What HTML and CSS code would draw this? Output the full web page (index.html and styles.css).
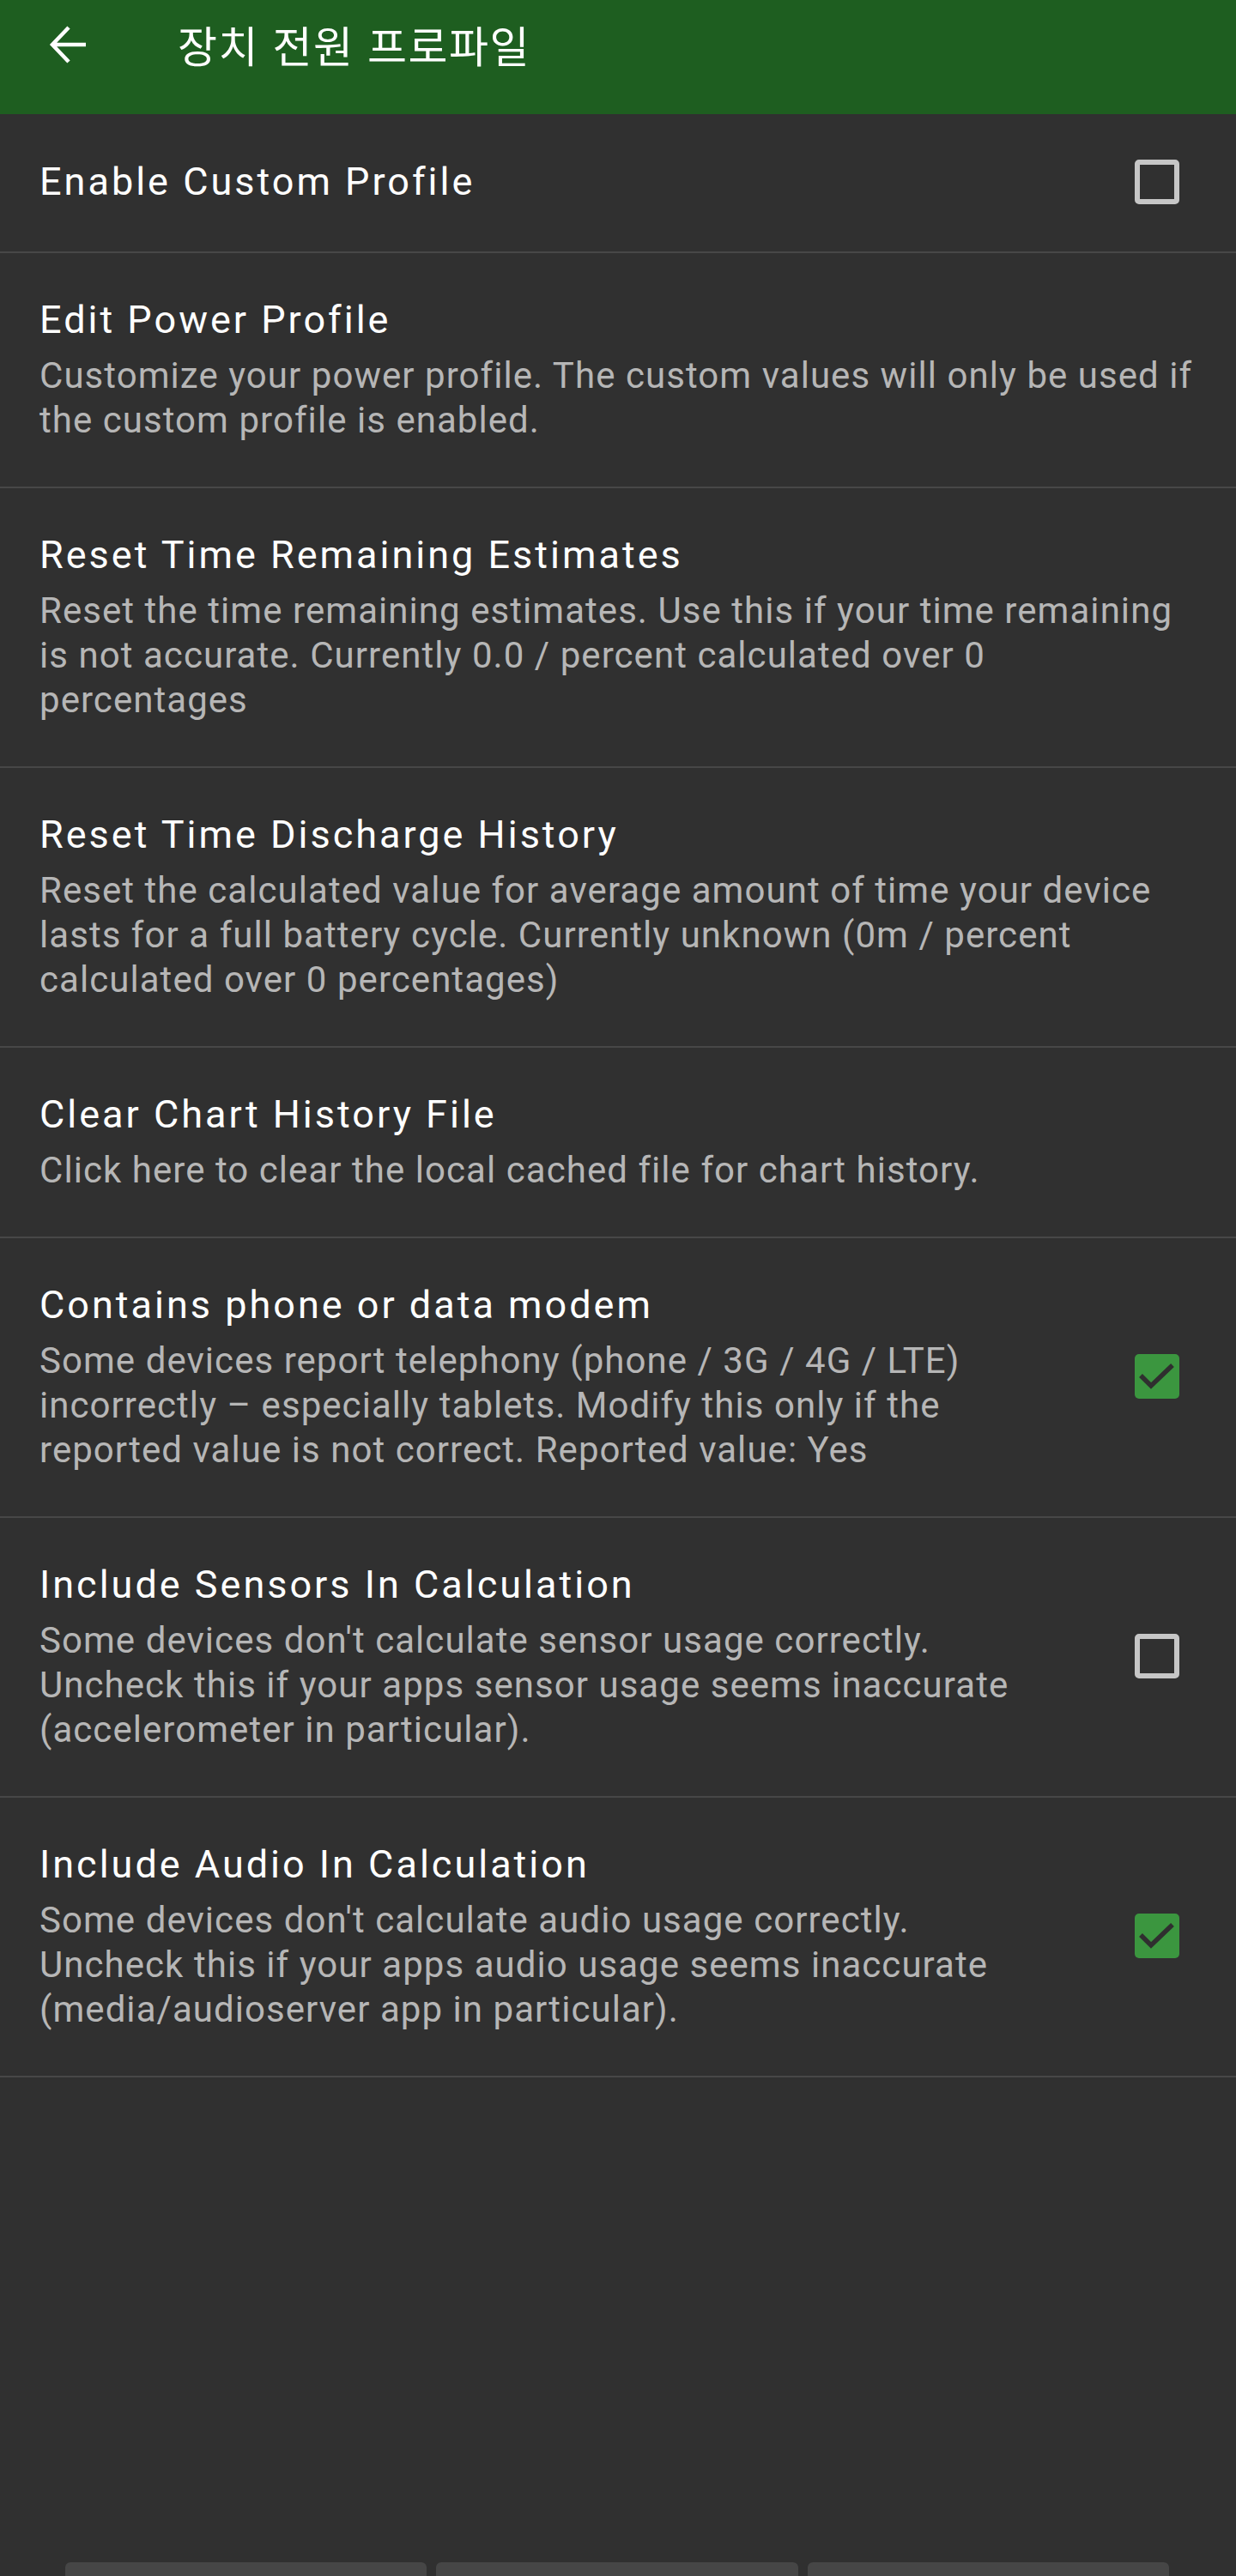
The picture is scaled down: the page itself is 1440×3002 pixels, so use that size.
FILE: index.html
```html
<!DOCTYPE html>
<html lang="ko">
<head>
<meta charset="utf-8">
<title>장치 전원 프로파일</title>
<link rel="stylesheet" href="styles.css">
</head>
<body>
<div class="screen">
  <header class="appbar">
    <svg class="back" viewBox="0 0 48 48" width="48" height="48" aria-hidden="true">
      <path d="M44 24H6M24 4L5 24l19 20" fill="none" stroke="#fff" stroke-width="4.5" stroke-linecap="butt" stroke-linejoin="miter"/>
    </svg>
    <h1 class="title">장치 전원 프로파일</h1>
  </header>

  <main class="list">
    <div class="pref">
      <div class="text"><div class="ptitle">Enable Custom Profile</div></div>
      <span class="cb"></span>
    </div>
    <div class="pref">
      <div class="text wide">
        <div class="ptitle">Edit Power Profile</div>
        <div class="psum">Customize your power profile. The custom values will only be used if the custom profile is enabled.</div>
      </div>
    </div>
    <div class="pref">
      <div class="text wide">
        <div class="ptitle">Reset Time Remaining Estimates</div>
        <div class="psum">Reset the time remaining estimates. Use this if your time remaining is not accurate. Currently 0.0 / percent calculated over 0 percentages</div>
      </div>
    </div>
    <div class="pref">
      <div class="text wide">
        <div class="ptitle">Reset Time Discharge History</div>
        <div class="psum">Reset the calculated value for average amount of time your device lasts for a full battery cycle. Currently unknown (0m / percent calculated over 0 percentages)</div>
      </div>
    </div>
    <div class="pref">
      <div class="text wide">
        <div class="ptitle">Clear Chart History File</div>
        <div class="psum">Click here to clear the local cached file for chart history.</div>
      </div>
    </div>
    <div class="pref">
      <div class="text">
        <div class="ptitle">Contains phone or data modem</div>
        <div class="psum">Some devices report telephony (phone / 3G / 4G / LTE) incorrectly – especially tablets. Modify this only if the reported value is not correct. Reported value: Yes</div>
      </div>
      <span class="cb on"><svg viewBox="0 0 52 52" width="52" height="52"><path d="M7 25l12 12L44 13" fill="none" stroke="#2f2f2f" stroke-width="5.5"/></svg></span>
    </div>
    <div class="pref">
      <div class="text">
        <div class="ptitle">Include Sensors In Calculation</div>
        <div class="psum">Some devices don't calculate sensor usage correctly. Uncheck this if your apps sensor usage seems inaccurate (accelerometer in particular).</div>
      </div>
      <span class="cb"></span>
    </div>
    <div class="pref">
      <div class="text">
        <div class="ptitle">Include Audio In Calculation</div>
        <div class="psum">Some devices don't calculate audio usage correctly. Uncheck this if your apps audio usage seems inaccurate (media/audioserver app in particular).</div>
      </div>
      <span class="cb on"><svg viewBox="0 0 52 52" width="52" height="52"><path d="M7 25l12 12L44 13" fill="none" stroke="#2f2f2f" stroke-width="5.5"/></svg></span>
    </div>
  </main>

  <footer class="navbar">
    <span class="tab"></span>
    <span class="tab"></span>
    <span class="tab"></span>
  </footer>
</div>
</body>
</html>
```

FILE: styles.css
```css
* { box-sizing: border-box; }
html, body { margin: 0; padding: 0; }
body {
  background: #303030;
  font-family: Roboto, "Noto Sans", "Noto Sans CJK KR", sans-serif;
  color: #fff;
}
.screen {
  width: 1440px;
  height: 3002px;
  display: flex;
  flex-direction: column;
  background: #303030;
  overflow: hidden;
}
.appbar {
  height: 133px;
  flex: none;
  background: #1e5e20;
  display: flex;
  align-items: flex-start;
  padding: 26px 0 0 56px;
}
.back { display: block; margin-top: 2px; }
.title {
  margin: 0 0 0 103px;
  font-family: "Noto Sans CJK KR", sans-serif;
  font-weight: 400;
  font-size: 50px;
  line-height: 50px;
  letter-spacing: 1.5px;
  color: #fff;
}
.list { flex: 1; }
.pref {
  display: flex;
  align-items: center;
  min-height: 162px;
  padding: 48px 66px 51px 46px;
  border-bottom: 2px solid #474747;
}
.text { flex: 1; min-width: 0; padding-right: 100px; }
.text.wide { padding-right: 0; margin-right: -26px; }
.ptitle {
  font-size: 45px;
  line-height: 60px;
  letter-spacing: 3px;
  color: #fff;
}
.psum {
  margin-top: 9px;
  font-size: 42px;
  line-height: 52px;
  letter-spacing: 1.05px;
  color: #b6b6b6;
}
.cb {
  flex: none;
  width: 52px;
  height: 52px;
  border: 6px solid #c6c6c6;
  border-radius: 5px;
  display: block;
}
.cb.on {
  border: none;
  background: #3b963f;
}
.cb svg { display: block; }
.navbar {
  flex: none;
  height: 16px;
  display: flex;
  gap: 11px;
  padding: 0 78px 0 76px;
  align-items: flex-start;
}
.tab {
  flex: 1;
  height: 16px;
  background: #464646;
  border-radius: 6px 6px 0 0;
}
```
